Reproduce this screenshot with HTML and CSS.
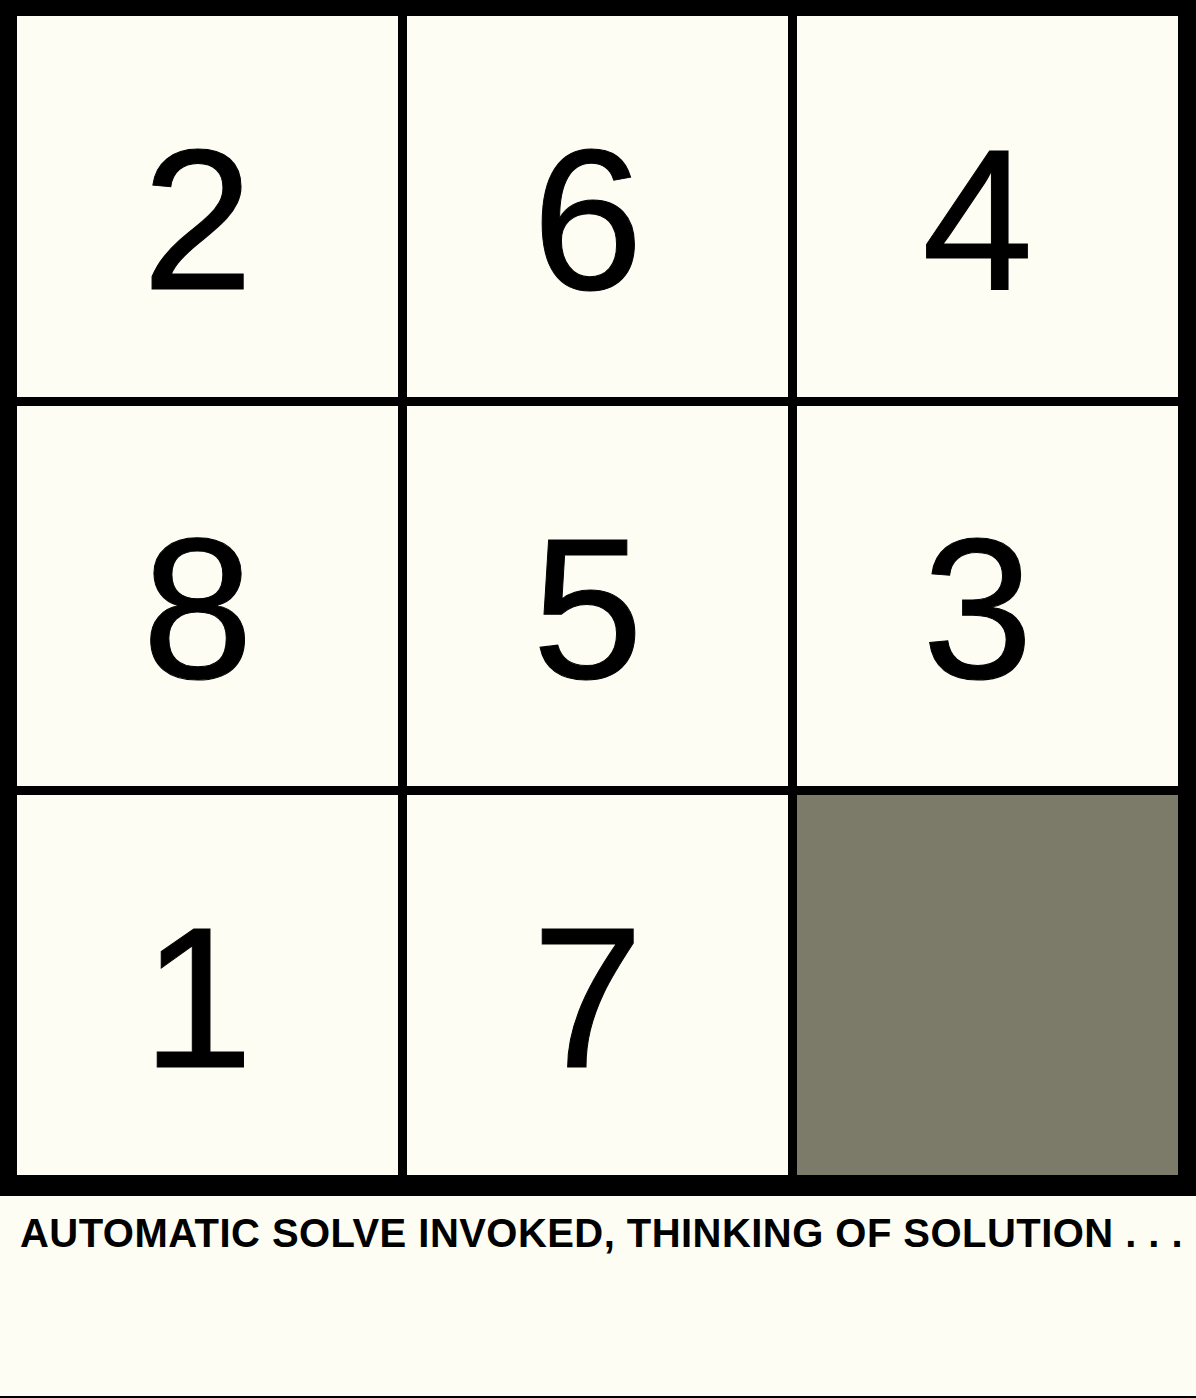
FILE: index.html
```html
<!DOCTYPE html>
<html>
<head>
<meta charset="utf-8">
<link rel="stylesheet" href="styles.css">
</head>
<body>
<div class="page">
  <div class="board">
    <div class="tile">2</div>
    <div class="tile">6</div>
    <div class="tile">4</div>
    <div class="tile">8</div>
    <div class="tile">5</div>
    <div class="tile">3</div>
    <div class="tile">1</div>
    <div class="tile">7</div>
    <div class="tile empty"></div>
  </div>
  <p class="status">AUTOMATIC SOLVE INVOKED, THINKING OF SOLUTION . . .</p>
</div>
<div class="footer-line"></div>
</body>
</html>
```

FILE: styles.css
```css
html, body {
  margin: 0;
  padding: 0;
  background: #fdfdf4;
}
body {
  width: 1196px;
  height: 1398px;
  overflow: hidden;
  font-family: "Liberation Sans", Arial, sans-serif;
  color: #000;
  display: flex;
  flex-direction: column;
}
.page {
  flex: 1;
}
.board {
  box-sizing: border-box;
  width: 1196px;
  height: 1196px;
  background: #000;
  padding: 16px 18px 20px 17px;
  display: grid;
  grid-template-columns: 381px 381px 381px;
  grid-template-rows: 381px 380px 380px;
  column-gap: 9px;
  row-gap: 9px;
}
.tile {
  background: #fdfdf4;
  display: flex;
  align-items: center;
  justify-content: center;
  font-size: 200px;
  line-height: 1;
  padding: 26px 20px 0 0;
  box-sizing: border-box;
  -webkit-text-stroke: 1px #000;
}
.tile.empty {
  background: #7c7b6a;
}
.status {
  margin: 15px 0 0 0;
  padding-left: 20px;
  font-size: 40px;
  font-weight: bold;
  letter-spacing: 0.45px;
  white-space: nowrap;
}
.footer-line {
  height: 2px;
  background: #000;
}
```
